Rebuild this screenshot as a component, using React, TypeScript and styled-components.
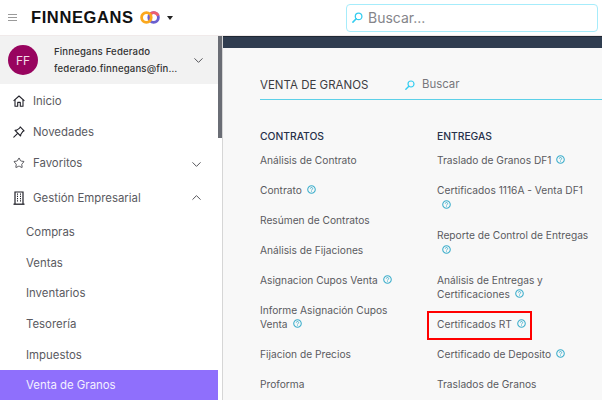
import React from 'react'
import styled, { createGlobalStyle } from 'styled-components'
import { ChevronDown, ChevronUp, Star } from 'lucide-react'

const GlobalStyle = createGlobalStyle`
  html, body {
    margin: 0;
    padding: 0;
    background: #fff;
    overflow: hidden;
  }
  * {
    box-sizing: border-box;
  }
`

const Page = styled.div`
  width: 602px;
  height: 400px;
  overflow: hidden;
  display: flex;
  flex-direction: column;
  font-family: Inter, 'Noto Sans', sans-serif;
  color: #4a4a4f;
`

const TopBar = styled.header`
  height: 36px;
  flex: none;
  display: flex;
  align-items: center;
  padding: 0 4px 0 8px;
  background: #fff;
  border-bottom: 1px solid #f0eaea;
`

const Burger = styled.div`
  width: 9px;
  height: 7px;
  margin-right: 14px;
  border-top: 1px solid #9a9a9a;
  border-bottom: 1px solid #9a9a9a;
  position: relative;

  &::after {
    content: '';
    position: absolute;
    left: 0;
    right: 0;
    top: 2px;
    height: 1px;
    background: #9a9a9a;
  }
`

const Brand = styled.span`
  font-family: 'Liberation Sans', Arial, sans-serif;
  font-size: 16.5px;
  font-weight: 700;
  letter-spacing: 0.6px;
  color: #111;
  width: 109px;
  white-space: nowrap;
`

const Caret = styled.div`
  width: 0;
  height: 0;
  margin: 1px 0 0 7px;
  border-left: 3.5px solid transparent;
  border-right: 3.5px solid transparent;
  border-top: 4px solid #222;
`

const TopSearch = styled.div`
  width: 252px;
  height: 28px;
  margin-left: auto;
  display: flex;
  align-items: center;
  gap: 5px;
  padding-left: 5px;
  border: 1.5px solid #a6ecfb;
  border-radius: 4px;
  font-size: 14px;
  color: #85858a;
`

const Body = styled.div`
  flex: 1;
  min-height: 0;
  display: flex;
`

const Sidebar = styled.aside`
  width: 218px;
  flex: none;
  display: flex;
  flex-direction: column;
  background: #fff;
`

const Scrollbar = styled.div`
  width: 5px;
  flex: none;
  background: #fff;
  border-right: 1px solid #d6d6d6;
`

const Thumb = styled.div`
  width: 4px;
  height: 102px;
  background: #6a6d75;
`

const UserPanel = styled.div`
  height: 48px;
  flex: none;
  width: 222px;
  display: flex;
  align-items: center;
  padding-left: 8px;
  background: #f2f2f2;
`

const Avatar = styled.div`
  width: 30px;
  height: 30px;
  flex: none;
  display: flex;
  align-items: center;
  justify-content: center;
  border-radius: 50%;
  background: #98045f;
  color: #f4dbe8;
  font-size: 12px;
`

const UserText = styled.div`
  width: 124px;
  margin-left: 16px;
  font-size: 9.6px;
  font-weight: 500;
  line-height: 17.5px;
  letter-spacing: 0.15px;
  color: #333;
  white-space: nowrap;
`

const Email = styled.div`
  overflow: hidden;
  text-overflow: ellipsis;
`

const UserChevron = styled(ChevronDown)`
  margin-left: 13px;
  color: #55555a;
`

const Menu = styled.nav`
  flex: 1;
  padding-top: 2px;
  display: flex;
  flex-direction: column;
`

const MenuRow = styled.div<{ $height: number }>`
  height: ${({ $height }) => $height}px;
  flex: none;
  display: flex;
  align-items: center;
  padding: 0 14px 0 13px;
  font-size: 11.4px;
  color: #5a5a61;
`

const MenuIcon = styled.span`
  width: 20px;
  flex: none;
  display: flex;
  color: #22222a;
`

const MenuChevron = styled.span<{ $drop: number }>`
  margin-left: auto;
  margin-top: ${({ $drop }) => $drop}px;
  display: flex;
  color: #55555a;
`

const SubRow = styled.div<{ $active?: boolean }>`
  height: 30.6px;
  flex: none;
  display: flex;
  align-items: center;
  padding-left: 26px;
  font-size: 11.4px;
  color: ${({ $active }) => ($active ? '#f3efff' : '#5a5a61')};
  background: ${({ $active }) => ($active ? '#8f6ffc' : 'transparent')};
`

const Content = styled.main`
  flex: 1;
  min-width: 0;
  display: flex;
  flex-direction: column;
  background: #f8f8f8;
`

const DarkBand = styled.div`
  height: 12px;
  flex: none;
  background: #303d50;
  border-top: 1px solid #1f2733;
`

const ContentInner = styled.div`
  padding: 0 0 0 37px;
`

const TitleRow = styled.div`
  height: 52px;
  display: flex;
  align-items: flex-end;
  padding-bottom: 7px;
  border-bottom: 1.5px solid #5cd0e8;
`

const Title = styled.h1`
  width: 145px;
  margin: 0 0 -1px;
  font-size: 11.5px;
  font-weight: 400;
  line-height: 15px;
  color: #3c3c42;
  white-space: nowrap;
`

const InnerSearch = styled.div`
  display: flex;
  align-items: center;
  gap: 7px;
  font-size: 11.4px;
  line-height: 15px;
  color: #77777c;
`

const Columns = styled.div`
  display: grid;
  grid-template-columns: 177px 1fr;
  padding-top: 29px;
`

const Column = styled.section<{ $linkWidth: number }>`
  display: flex;
  flex-direction: column;
  --link-width: ${({ $linkWidth }) => $linkWidth}px;
`

const Heading = styled.h2`
  margin: 0 0 9px;
  font-size: 10.3px;
  font-weight: 500;
  line-height: 15px;
  color: #27304a;
`

const Link = styled.div`
  position: relative;
  margin-bottom: 15px;
  font-size: 10.2px;
  line-height: 14.9px;
  color: #5a5a5f;
  max-width: var(--link-width);
`

const Highlight = styled.div`
  position: absolute;
  left: -10px;
  top: -6px;
  width: 105px;
  height: 29px;
  border: 2px solid #ff0000;
`

const HelpWrap = styled.svg`
  display: inline-block;
  width: 9px;
  height: 9px;
  margin-left: 5px;
  vertical-align: 0;
`

function Help() {
  return (
    <HelpWrap viewBox="0 0 10 10" fill="none" stroke="#3fafcc">
      <circle cx="5" cy="5" r="4.2" strokeWidth="1.2" />
      <path d="M3.7 4a1.3 1.3 0 1 1 1.9 1.2c-.4.2-.6.4-.6.8" strokeWidth="1" />
      <path d="M5 7v.7" strokeWidth="1" />
    </HelpWrap>
  )
}

function SearchGlyph({ size }: { size: number }) {
  return (
    <svg width={size} height={size} viewBox="0 0 12 12" fill="none" stroke="#35cdf0" strokeWidth="1.4">
      <circle cx="7.2" cy="4.8" r="3.6" />
      <path d="M4.6 7.4 1 11" strokeLinecap="round" strokeWidth="1.7" />
    </svg>
  )
}

function LogoRings() {
  return (
    <svg width="20" height="13" viewBox="0 0 20 13" fill="none" strokeWidth="2.8">
      <circle cx="13.6" cy="6.5" r="4.8" stroke="#6a5fd0" />
      <path d="M9.6 3.8a4.8 4.8 0 0 1 8.6 1" stroke="#ee5f6e" />
      <circle cx="6.4" cy="6.5" r="4.8" stroke="#fba81d" />
    </svg>
  )
}

function HomeGlyph() {
  return (
    <svg width="12" height="12" viewBox="0 0 12 12" fill="none" stroke="currentColor" strokeWidth="1.1" strokeLinejoin="round">
      <path d="M.6 5.9 6 1l5.4 4.9" />
      <path d="M2 4.8v6.4h2.7V7.4h2.6v3.8H10V4.8" />
    </svg>
  )
}

function PinGlyph() {
  return (
    <svg width="12" height="12" viewBox="0 0 12 12" fill="none" stroke="currentColor" strokeWidth="1.1" strokeLinejoin="round">
      <path d="M7.2.9 11.1 4.8 9.9 5.4 7.9 8.2 7.6 10 2 4.4 3.8 4.1 6.6 2.1Z" />
      <path d="M4.4 7.6.8 11.2" strokeLinecap="round" />
    </svg>
  )
}

function OfficeGlyph() {
  return (
    <svg width="12" height="14" viewBox="0 0 12 14" fill="none" stroke="currentColor">
      <path d="M2 13V1h8v12" strokeWidth="1.2" />
      <path d="M.5 13.2h11" strokeWidth="1.3" />
      <path d="M4 3.2h1M7 3.2h1M4 5.4h1M7 5.4h1M4 7.6h1M7 7.6h1M4 9.8h1M7 9.8h1" strokeWidth="1.2" />
    </svg>
  )
}

const subItems = ['Compras', 'Ventas', 'Inventarios', 'Tesorería', 'Impuestos']

type LinkItem = { label: string; help?: boolean; marked?: boolean }

const contratos: LinkItem[] = [
  { label: 'Análisis de Contrato' },
  { label: 'Contrato', help: true },
  { label: 'Resúmen de Contratos' },
  { label: 'Análisis de Fijaciones' },
  { label: 'Asignacion Cupos Venta', help: true },
  { label: 'Informe Asignación Cupos Venta', help: true },
  { label: 'Fijacion de Precios' },
  { label: 'Proforma' },
]

const entregas: LinkItem[] = [
  { label: 'Traslado de Granos DF1', help: true },
  { label: 'Certificados 1116A - Venta DF1', help: true },
  { label: 'Reporte de Control de Entregas', help: true },
  { label: 'Análisis de Entregas y Certificaciones', help: true },
  { label: 'Certificados RT', help: true, marked: true },
  { label: 'Certificado de Deposito', help: true },
  { label: 'Traslados de Granos' },
]

function LinkList({ title, items, linkWidth }: { title: string; items: LinkItem[]; linkWidth: number }) {
  return (
    <Column $linkWidth={linkWidth}>
      <Heading>{title}</Heading>
      {items.map((item) => (
        <Link key={item.label}>
          {item.label}
          {item.help && <Help />}
          {item.marked && <Highlight />}
        </Link>
      ))}
    </Column>
  )
}

export default function App() {
  return (
    <Page>
      <GlobalStyle />
      <TopBar>
        <Burger />
        <Brand>FINNEGANS</Brand>
        <LogoRings />
        <Caret />
        <TopSearch>
          <SearchGlyph size={11} />
          Buscar...
        </TopSearch>
      </TopBar>
      <Body>
        <Sidebar>
          <UserPanel>
            <Avatar>FF</Avatar>
            <UserText>
              <div>Finnegans Federado</div>
              <Email>federado.finnegans@finnegans.com.ar</Email>
            </UserText>
            <UserChevron size={15} strokeWidth={1.6} />
          </UserPanel>
          <Menu>
            <MenuRow $height={30}>
              <MenuIcon><HomeGlyph /></MenuIcon>
              Inicio
            </MenuRow>
            <MenuRow $height={31}>
              <MenuIcon><PinGlyph /></MenuIcon>
              Novedades
            </MenuRow>
            <MenuRow $height={32}>
              <MenuIcon><Star size={12} strokeWidth={1.5} /></MenuIcon>
              Favoritos
              <MenuChevron $drop={3}><ChevronDown size={15} strokeWidth={1.6} /></MenuChevron>
            </MenuRow>
            <MenuRow $height={38}>
              <MenuIcon><OfficeGlyph /></MenuIcon>
              Gestión Empresarial
              <MenuChevron $drop={-2}><ChevronUp size={15} strokeWidth={1.6} /></MenuChevron>
            </MenuRow>
            {subItems.map((name) => (
              <SubRow key={name}>{name}</SubRow>
            ))}
            <SubRow $active>Venta de Granos</SubRow>
          </Menu>
        </Sidebar>
        <Scrollbar>
          <Thumb />
        </Scrollbar>
        <Content>
          <DarkBand />
          <ContentInner>
            <TitleRow>
              <Title>VENTA DE GRANOS</Title>
              <InnerSearch>
                <SearchGlyph size={10} />
                Buscar
              </InnerSearch>
            </TitleRow>
            <Columns>
              <LinkList title="CONTRATOS" items={contratos} linkWidth={145} />
              <LinkList title="ENTREGAS" items={entregas} linkWidth={156} />
            </Columns>
          </ContentInner>
        </Content>
      </Body>
    </Page>
  )
}
